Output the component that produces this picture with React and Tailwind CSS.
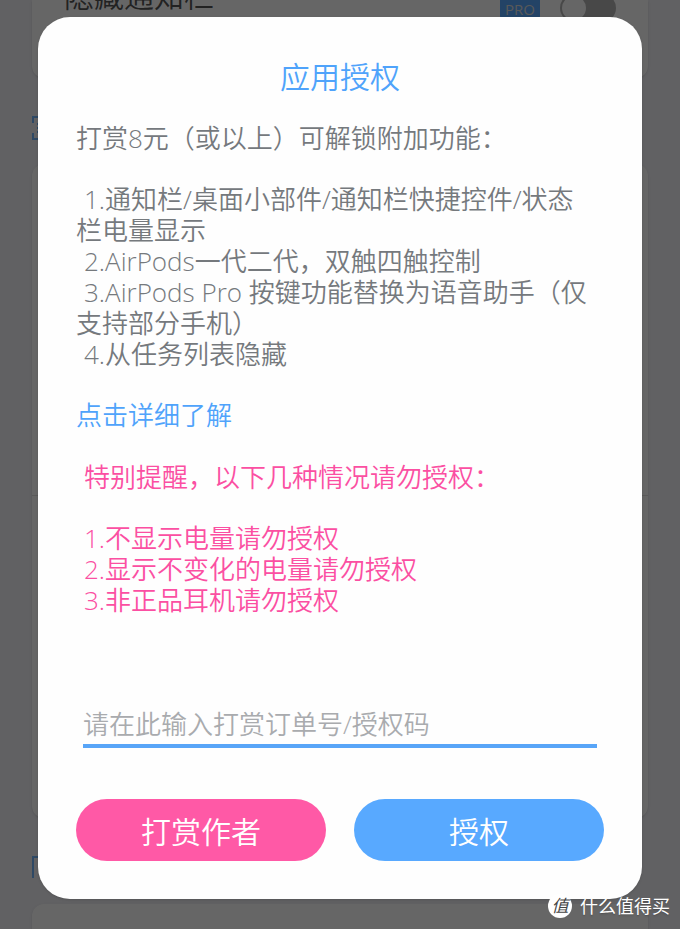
import React, { useState } from "react";

const features = [
  "1.通知栏/桌面小部件/通知栏快捷控件/状态栏电量显示",
  "2.AirPods一代二代，双触四触控制",
  "3.AirPods Pro 按键功能替换为语音助手（仅支持部分手机）",
  "4.从任务列表隐藏",
];

const warnings = [
  "1.不显示电量请勿授权",
  "2.显示不变化的电量请勿授权",
  "3.非正品耳机请勿授权",
];

const SettingsPage = () => {
  const [hidden, setHidden] = useState(false);

  return (
    <div className="min-h-screen bg-[#f2f2f7] px-8 flex flex-col">
      <section className="h-[78px] bg-white rounded-b-xl shadow-sm px-8 flex items-start justify-between">
        <label htmlFor="hide-bar" className="text-[30px] leading-[36px] -mt-[22px] text-[#555]">
          隐藏通知栏
        </label>
        <div className="flex items-center gap-5 -mt-1.5">
          <span className="w-10 h-6 rounded bg-[#58a9ff] text-[#ddd] text-[15px] leading-6 font-normal pt-px text-center">PRO</span>
          <input
            type="checkbox"
            id="hide-bar"
            checked={hidden}
            onChange={(e) => setHidden(e.target.checked)}
            className="appearance-none w-14 h-7 rounded-full bg-[#b4b4b4] border-2 border-[#b4b4b4] before:block before:size-6 before:rounded-full before:bg-white"
          />
        </div>
      </section>

      <div className="h-[86px] pt-[38px]">
        <svg viewBox="0 0 24 24" className="w-6 h-6 text-[#58a9ff] opacity-80" fill="none" stroke="currentColor" strokeWidth="2">
          <path d="M6 1H1v6M18 1h5v6M6 23H1v-6M18 23h5v-6M5 8h13M5 12h13M5 16h13" />
        </svg>
      </div>

      <section className="h-[654px] bg-white rounded-xl shadow-sm">
        <div className="h-[332px] border-b border-[#e0e0e0]" />
      </section>

      <div className="h-[86px] pt-[38px]">
        <svg viewBox="0 0 24 24" className="w-6 h-6 text-[#58a9ff] opacity-80" fill="none" stroke="currentColor" strokeWidth="2">
          <path d="M1 22V1h22v21" />
        </svg>
      </div>

      <section className="flex-1 bg-white rounded-t-xl shadow-sm" />
    </div>
  );
};

const AuthDialog = () => {
  const [code, setCode] = useState("");

  return (
    <form
      onSubmit={(e) => e.preventDefault()}
      className="w-full bg-[#fefefe] rounded-[32px] px-[38px] pt-10 pb-[38px] shadow-sm"
    >
      <h1 className="text-[30px] leading-10 text-center text-[#4fa3fb]">应用授权</h1>

      <div className="mt-6 pt-0.5 pr-3 text-[26px] leading-[31px] text-[#75797d]">
        <p>打赏8元（或以上）可解锁附加功能：</p>
        <ol className="mt-[30px]">
          {features.map((item) => (
            <li key={item} className="indent-2">{item}</li>
          ))}
        </ol>
        <a href="#detail" className="block mt-[30px] text-[#4fa3fb]">点击详细了解</a>
        <div className="mt-[31px] pl-2 text-[#fb4fa2]">
          <p>特别提醒，以下几种情况请勿授权：</p>
          <ol className="mt-[30px]">
            {warnings.map((item) => (
              <li key={item}>{item}</li>
            ))}
          </ol>
        </div>
      </div>

      <input
        type="text"
        aria-label="授权码"
        value={code}
        onChange={(e) => setCode(e.target.value)}
        placeholder="请在此输入打赏订单号/授权码"
        className="block mt-[84px] mx-[7px] w-[calc(100%-14px)] h-[48px] pt-1 border-b-4 border-[#58a5f8] text-[26px] text-[#75797d] placeholder:text-[#a9abae] outline-none"
      />

      <div className="mt-[51px] flex gap-7 text-[30px] text-white">
        <button type="button" className="flex-1 h-[62px] pt-0.5 rounded-full bg-[#ff59a6]">打赏作者</button>
        <button type="submit" className="flex-1 h-[62px] pt-0.5 rounded-full bg-[#58a9ff]">授权</button>
      </div>
    </form>
  );
};

const App = () => {
  return (
    <div className="relative min-h-screen overflow-hidden font-[350] font-['Open_Sans','Noto_Sans_CJK_SC',sans-serif]">
      <SettingsPage />

      {/* Dimmed overlay */}
      <div className="absolute inset-0 bg-black/60 px-[38px] pt-[17px]">
        <AuthDialog />
      </div>

      {/* Watermark */}
      <div className="absolute right-[10px] bottom-[11px] flex items-center gap-2 text-white text-[18px] leading-6 font-normal text-shadow-sm">
        <span className="size-6 rounded-full bg-white text-[#444] text-center text-[17px] italic text-shadow-none">值</span>
        <span>什么值得买</span>
      </div>
    </div>
  );
};

export default App;
